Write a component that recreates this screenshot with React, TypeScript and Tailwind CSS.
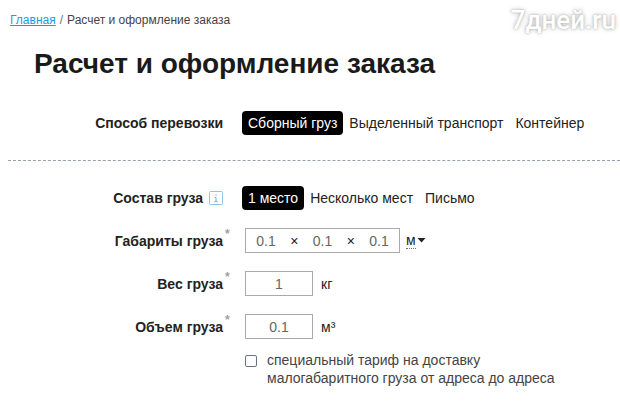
import { useState } from 'react';
import type { ReactNode } from 'react';

const DELIVERY_TYPES = ['Сборный груз', 'Выделенный транспорт', 'Контейнер'];
const CARGO_TYPES = ['1 место', 'Несколько мест', 'Письмо'];

type RowProps = {
  label: string;
  htmlFor?: string;
  required?: boolean;
  icon?: ReactNode;
  children: ReactNode;
};

function Row({ label, htmlFor, required, icon, children }: RowProps) {
  return (
    <div className="flex items-center">
      <div className="flex w-[223px] shrink-0 items-center justify-end gap-1.5 font-bold">
        {htmlFor ? <label htmlFor={htmlFor}>{label}</label> : <span>{label}</span>}
        {icon}
      </div>
      <span className="w-[19px] shrink-0 self-start pl-0.5 text-xs leading-3 font-bold text-gray-400">
        {required && '*'}
      </span>
      {children}
    </div>
  );
}

function Tabs({ items }: { items: string[] }) {
  const [active, setActive] = useState(0);

  return (
    <div className="flex whitespace-nowrap">
      {items.map((item, i) => (
        <button
          key={item}
          type="button"
          onClick={() => setActive(i)}
          className={
            i === active
              ? 'h-6 rounded bg-black px-1.5 text-white'
              : 'h-6 rounded px-1.5 text-[#222]'
          }
        >
          {item}
        </button>
      ))}
    </div>
  );
}

function InfoIcon() {
  return (
    <svg width="14" height="14" viewBox="0 0 14 14" fill="none" stroke="#8fc4e4">
      <rect x="0.5" y="0.5" width="13" height="13" rx="1" />
      <path d="M7 3v1.5M5.5 6.5H7V11M5.5 10.5h3" stroke="#6fb3dc" />
    </svg>
  );
}

function SizeInput({ id, label }: { id: string; label: string }) {
  return (
    <input
      id={id}
      aria-label={label}
      defaultValue="0.1"
      className="w-10 bg-transparent text-center text-[#666] outline-none"
    />
  );
}

export default function App() {
  return (
    <main className="bg-white pb-6 font-['Liberation_Sans',Arial,sans-serif] text-sm text-[#222]">
      <header className="flex items-start justify-between pr-1 pl-2.5">
        <nav className="flex gap-1 pt-3 text-xs text-[#444]">
          <a href="#" className="text-[#1a9be0] underline">Главная</a>
          <span className="text-gray-500">/</span>
          <span>Расчет и оформление заказа</span>
        </nav>
        <div className="pt-1 font-['Roboto',sans-serif] text-[26px] leading-8 font-medium text-white [text-shadow:0_0_2px_#aaa,0_0_5px_#bbb]">
          7дней.ru
        </div>
      </header>

      <h1 className="pt-3 pl-[34px] text-[28px] leading-8 font-bold text-[#1a1a1a]">
        Расчет и оформление заказа
      </h1>

      <form>
        <section className="pt-[31px] pb-[25px]">
          <Row label="Способ перевозки">
            <Tabs items={DELIVERY_TYPES} />
          </Row>
        </section>

        <section className="ml-2 border-t border-dashed border-gray-400" />

        <section className="flex flex-col gap-[18px] pt-[25px]">
          <Row label="Состав груза" icon={<InfoIcon />}>
            <Tabs items={CARGO_TYPES} />
          </Row>

          <Row label="Габариты груза" htmlFor="length" required>
            <div className="ml-[3px] flex h-[25px] w-[155px] items-center justify-between border border-[#aaa]">
              <SizeInput id="length" label="Длина" />
              <span>×</span>
              <SizeInput id="width" label="Ширина" />
              <span>×</span>
              <SizeInput id="height" label="Высота" />
            </div>
            <div className="ml-1.5 flex items-center">
              <select
                aria-label="Единица измерения"
                className="w-2.5 appearance-none border-b border-dotted border-gray-500 bg-transparent leading-4 outline-none"
              >
                <option>м</option>
                <option>см</option>
              </select>
              <svg width="9" height="5" viewBox="0 0 9 5" className="ml-px" fill="#222">
                <path d="M0.5 0h8l-4 4.5z" />
              </svg>
            </div>
          </Row>

          <Row label="Вес груза" htmlFor="weight" required>
            <input
              id="weight"
              defaultValue="1"
              className="ml-[3px] h-[25px] w-[68px] border border-[#aaa] text-center text-[#666]"
            />
            <span className="ml-2">кг</span>
          </Row>

          <Row label="Объем груза" htmlFor="volume" required>
            <input
              id="volume"
              defaultValue="0.1"
              className="ml-[3px] h-[25px] w-[68px] border border-[#aaa] text-center text-[#666]"
            />
            <span className="ml-2">м³</span>
          </Row>
        </section>

        <div className="flex items-start gap-2.5 pt-3 pl-[245px]">
          <input
            id="tariff"
            type="checkbox"
            className="mt-1 size-3 shrink-0 appearance-none rounded-xs border border-gray-500 checked:bg-black"
          />
          <label htmlFor="tariff" className="max-w-[300px] leading-[18px] text-[#444]">
            специальный тариф на доставку малогабаритного груза от адреса до адреса
          </label>
        </div>
      </form>
    </main>
  );
}
